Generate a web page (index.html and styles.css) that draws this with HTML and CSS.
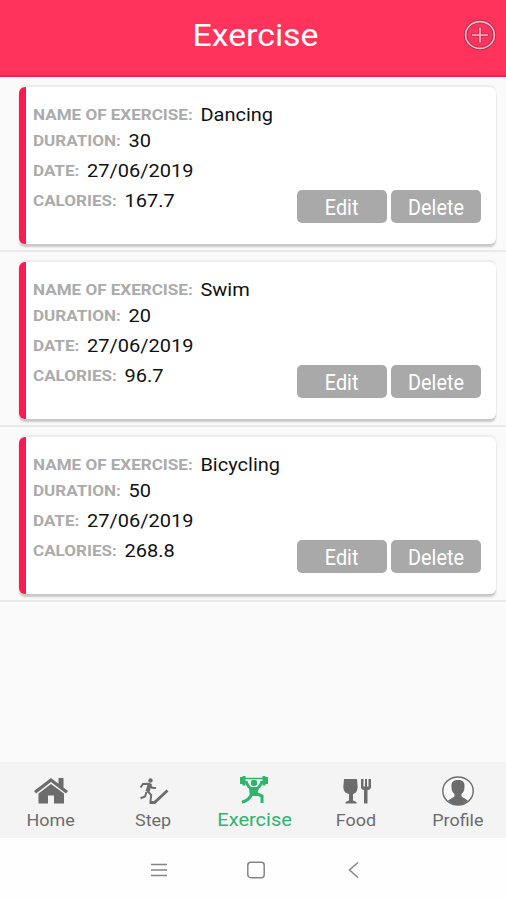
FILE: index.html
```html
<!DOCTYPE html>
<html lang="en">
<head>
<meta charset="utf-8">
<title>Exercise</title>
<link rel="stylesheet" href="styles.css">
</head>
<body>
<div class="screen">
  <header class="header">
    <span></span>
    <h1 class="title">Exercise</h1>
    <svg class="add" viewBox="0 0 36 32">
      <g fill="none" stroke="#a83050" stroke-width="3.500"><ellipse cx="18" cy="16" rx="14.400" ry="13.400"/><path d="M18 8v16M9.500 16h17" stroke-width="3"/></g>
      <g fill="none" stroke="#ffb8c6" stroke-width="1.600"><ellipse cx="18" cy="16" rx="14.400" ry="13.400"/><path d="M18 8.500v15M10 16h16"/></g>
    </svg>
  </header>
  <main class="list">
    <section class="item"><div class="card">
      <dl class="details">
        <div class="row"><dt>NAME OF EXERCISE:</dt><dd>Dancing</dd></div>
        <div class="row"><dt>DURATION:</dt><dd>30</dd></div>
        <div class="row"><dt>DATE:</dt><dd>27/06/2019</dd></div>
        <div class="row"><dt>CALORIES:</dt><dd>167.7</dd></div>
      </dl>
      <div class="actions"><button><span>Edit</span></button><button><span>Delete</span></button></div>
    </div></section>
    <section class="item"><div class="card">
      <dl class="details">
        <div class="row"><dt>NAME OF EXERCISE:</dt><dd>Swim</dd></div>
        <div class="row"><dt>DURATION:</dt><dd>20</dd></div>
        <div class="row"><dt>DATE:</dt><dd>27/06/2019</dd></div>
        <div class="row"><dt>CALORIES:</dt><dd>96.7</dd></div>
      </dl>
      <div class="actions"><button><span>Edit</span></button><button><span>Delete</span></button></div>
    </div></section>
    <section class="item"><div class="card">
      <dl class="details">
        <div class="row"><dt>NAME OF EXERCISE:</dt><dd>Bicycling</dd></div>
        <div class="row"><dt>DURATION:</dt><dd>50</dd></div>
        <div class="row"><dt>DATE:</dt><dd>27/06/2019</dd></div>
        <div class="row"><dt>CALORIES:</dt><dd>268.8</dd></div>
      </dl>
      <div class="actions"><button><span>Edit</span></button><button><span>Delete</span></button></div>
    </div></section>
  </main>
  <nav class="tabs">
    <a class="tab">
      <svg viewBox="0 0 36 32"><path d="M18 3L1 16l2 2.500L18 7l15 11.500 2-2.500-4.500-3.500V3h-5v5.700z"/><path d="M18 9L5.500 18.500V28.500h9.500V20.500h6v8h10v-10z"/></svg>
      <span>Home</span>
    </a>
    <a class="tab">
      <svg viewBox="0 0 36 32"><circle cx="15.500" cy="5.500" r="2.200"/><path d="M15 8.500l-2.500 8" fill="none" stroke="currentColor" stroke-width="4"/><path d="M5.500 12.500l2.500-3.500 6-.3 3 4 4 .3M12.500 16l3.700 4-.7 6M11.500 17l-1.500 4.500-4.500 1.700" fill="none" stroke="currentColor" stroke-width="2"/><path d="M14.500 27.500h5l13-12" fill="none" stroke="currentColor" stroke-width="2.800"/></svg>
      <span>Step</span>
    </a>
    <a class="tab active">
      <svg viewBox="0 0 36 32"><path d="M4 4h2.500v7H4zM6.500 3H9.500v9.500H6.500zM26.500 3h3v9.500h-3zM29.500 4H32v7h-2.500z"/><path d="M9 5.500h18" stroke="currentColor" stroke-width="1.500"/><path d="M10 8q1.500 6 6 8h4q4.500-2 6-8" fill="none" stroke="currentColor" stroke-width="3"/><circle cx="18" cy="10" r="3.200"/><path d="M13 14h10l-1.500 7L24 23h-9l-1.500-2z"/><path d="M16 20q-2 7-10 9.300M20 20.500l6 2.500v7" fill="none" stroke="currentColor" stroke-width="3"/></svg>
      <span>Exercise</span>
    </a>
    <a class="tab">
      <svg viewBox="0 0 36 32"><path d="M6 4h13l.7 8q-.5 6-4.700 7v6.500l3.500 1.500v1.500h-11V27l3.500-1.500V19Q5.500 18 5.300 12z"/><path d="M23 4v8q0 3 3 3v13.500h3.500V15q3.500-.5 3.500-3V4h-2.500v7.500H29V4h-2v7.500H25.500V4z"/></svg>
      <span>Food</span>
    </a>
    <a class="tab">
      <svg viewBox="0 0 36 32"><ellipse cx="18" cy="16" rx="15.200" ry="14" fill="#f8f8f8" stroke="currentColor" stroke-width="1.400"/><path d="M18 5c-5 0-7 2.500-6.500 7 .2 4 1 5 3 7v2.500L8 25.500Q12 30 18 30T28 25.500L21.500 21.500V19c2-2 2.800-3 3-7 .5-4.500-1.500-7-6.500-7z"/></svg>
      <span>Profile</span>
    </a>
  </nav>
  <footer class="system">
    <svg viewBox="0 0 20 20"><path d="M2 4.500h16M2 10h16M2 15.500h16"/></svg>
    <svg viewBox="0 0 20 20"><rect x="1.800" y="2.300" width="16.400" height="15.400" rx="3"/></svg>
    <svg viewBox="0 0 20 20"><path d="M15 2.500L6.500 10l8.500 7.500"/></svg>
  </footer>
</div>
</body>
</html>
```
FILE: styles.css
```css
* { box-sizing: border-box; }
body { margin: 0; font-family: Roboto, sans-serif; background: #fafafa; }
.screen { width: 506px; height: 900px; display: flex; flex-direction: column; overflow: hidden; }
.header {
  height: 77px; flex: none; padding: 0 8px 6px;
  display: grid; grid-template-columns: 36px 1fr 36px; align-items: center;
  background: #ff335c; border-bottom: 2px solid #fb1b51; color: #fff;
}
.title { margin: 2px 0 0; text-align: center; font-size: 31px; font-weight: 400; transform: translateX(2.5px) scaleX(1.09); }
.add { width: 36px; height: 32px; }
.list { flex: 1; }
.item { height: 175px; padding: 10px 10px 7px 19px; border-bottom: 2px solid #e9e9e9; }
.card {
  height: 157px; display: flex; justify-content: space-between; align-items: flex-end;
  padding: 0 15px 21px 8px; background: #fff;
  border-left: 7px solid #fb1b51; border-radius: 6px;
  box-shadow: 0 3px 2px #c8c8c8, 0 -2px 1px #ececec;
}
.details { margin: 0 0 0 -1px; align-self: flex-start; padding-top: 12px; transform: scaleX(1.1); transform-origin: 0 0; }
.row { display: flex; align-items: baseline; gap: 7px; height: 30px; line-height: 31px; white-space: nowrap; }
.row:first-child { height: 26px; }
dt { font-size: 15.5px; font-weight: 700; color: #ababab; transform: translateY(-1px); }
dd { margin: 0; font-size: 18.200px; color: #111; }
.actions { display: flex; gap: 4px; }
button {
  width: 90px; height: 33px; padding: 1px 0 0; border: 0; border-radius: 5px;
  background: #a9a9a9; color: #fff; font: 400 22px Roboto, sans-serif;
}
button span { display: inline-block; transform: scaleX(.9); }
.tabs { height: 76px; flex: none; display: grid; grid-template-columns: repeat(5, 101.8px); background: #f4f4f4; }
.tab { display: flex; flex-direction: column; align-items: center; padding-top: 13px; color: #6c6c6c; }
.tab svg { width: 36px; height: 32px; fill: currentColor; }
.tab span { font-size: 16px; line-height: 27px; transform: scaleX(1.12); }
.tab.active { color: #2db56e; padding-top: 11px; }
.tab.active span { font-size: 18px; line-height: 29px; transform: scaleX(1.11); }
.system { height: 62px; flex: none; display: flex; justify-content: center; align-items: center; gap: 77px; padding: 2px 0 0 5px; background: #fefefe; }
.system svg { width: 20px; height: 20px; fill: none; stroke: #858585; stroke-width: 1.500; }
```
